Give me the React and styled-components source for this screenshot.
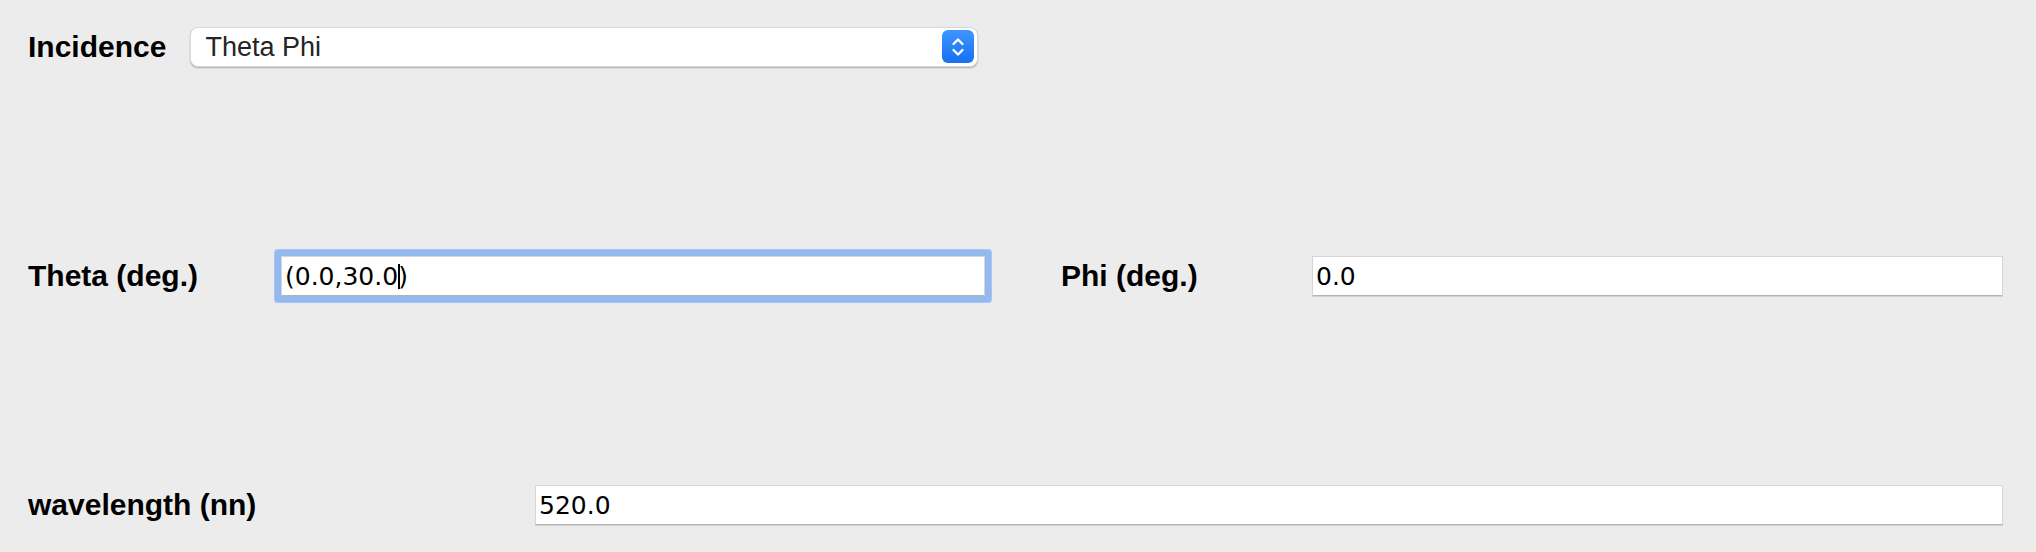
import React from "react";
import styled, { createGlobalStyle } from "styled-components";

const Global = createGlobalStyle`
  html, body {
    margin: 0;
    padding: 0;
    background: #ececec;
  }
  body {
    font-family: "Liberation Sans", Arial, sans-serif;
    width: 2036px;
    height: 552px;
    overflow: hidden;
  }
`;

const Page = styled.div`
  display: flex;
  flex-direction: column;
  gap: 189px;
  padding: 27px 33px 0 28px;
  box-sizing: border-box;
  width: 2036px;
  height: 552px;
`;

const HeaderRow = styled.div`
  display: flex;
  align-items: center;
  height: 40px;
  gap: 24px;
`;

const PairRow = styled.div`
  display: grid;
  grid-template-columns: ${(p) => p.$cols};
  align-items: center;
  height: 40px;
`;

const Label = styled.label`
  font-family: "Liberation Sans", Arial, sans-serif;
  font-weight: 700;
  font-size: 30px;
  color: #000;
  white-space: nowrap;
  line-height: 1;
`;

const Select = styled.div`
  position: relative;
  width: 788px;
  height: 40px;
  box-sizing: border-box;
  background: #fff;
  border-radius: 8px;
  border: 1px solid #d9d9d9;
  box-shadow: 0 1px 1.5px rgba(0, 0, 0, 0.28);
  display: flex;
  align-items: center;
  padding-left: 14px;
  font-family: "Liberation Sans", Arial, sans-serif;
  font-size: 27px;
  color: #242424;
`;

const Stepper = styled.span`
  position: absolute;
  right: 3px;
  top: 2px;
  width: 32px;
  height: 33px;
  border-radius: 6px;
  background: linear-gradient(#3f95ff, #1670f2);
  display: flex;
  align-items: center;
  justify-content: center;
`;

const Field = styled.div`
  height: 40px;
  box-sizing: border-box;
  background: #fff;
  border: 1px solid #d6d6d6;
  border-bottom-color: #b4b4b4;
  box-shadow: ${(p) =>
    p.$focused
      ? "0 0 0 6px #94b9ee, 0 0 0 7px #a9c6f0"
      : "0 1px 0 #d2d2d2"};
  border-radius: ${(p) => (p.$focused ? "1px" : "0")};
  display: flex;
  align-items: center;
  padding-left: 3px;
  font-family: "DejaVu Sans", Verdana, sans-serif;
  font-size: 25px;
  color: #000;
  white-space: pre;
`;

const Caret = styled.span`
  display: inline-block;
  width: 1.5px;
  height: 25px;
  background: #000;
  margin-right: -1.5px;
  vertical-align: middle;
`;

export default function App() {
  return (
    <>
      <Global />
      <Page>
        <HeaderRow>
          <Label>Incidence</Label>
          <Select>
            Theta Phi
            <Stepper>
              <svg width="14" height="22" viewBox="0 0 14 22" fill="none">
                <path
                  d="M2.5 8 L7 3.5 L11.5 8"
                  stroke="#fff"
                  strokeWidth="2.3"
                  strokeLinecap="round"
                  strokeLinejoin="round"
                />
                <path
                  d="M2.5 14 L7 18.5 L11.5 14"
                  stroke="#fff"
                  strokeWidth="2.3"
                  strokeLinecap="round"
                  strokeLinejoin="round"
                />
              </svg>
            </Stepper>
          </Select>
        </HeaderRow>

        <PairRow $cols="253px 704px 76px 251px 1fr">
          <Label>Theta (deg.)</Label>
          <Field $focused>
            (0.0,30.0<Caret />)
          </Field>
          <span />
          <Label>Phi (deg.)</Label>
          <Field>0.0</Field>
        </PairRow>

        <PairRow $cols="507px 1fr">
          <Label>wavelength (nn)</Label>
          <Field>520.0</Field>
        </PairRow>
      </Page>
    </>
  );
}
